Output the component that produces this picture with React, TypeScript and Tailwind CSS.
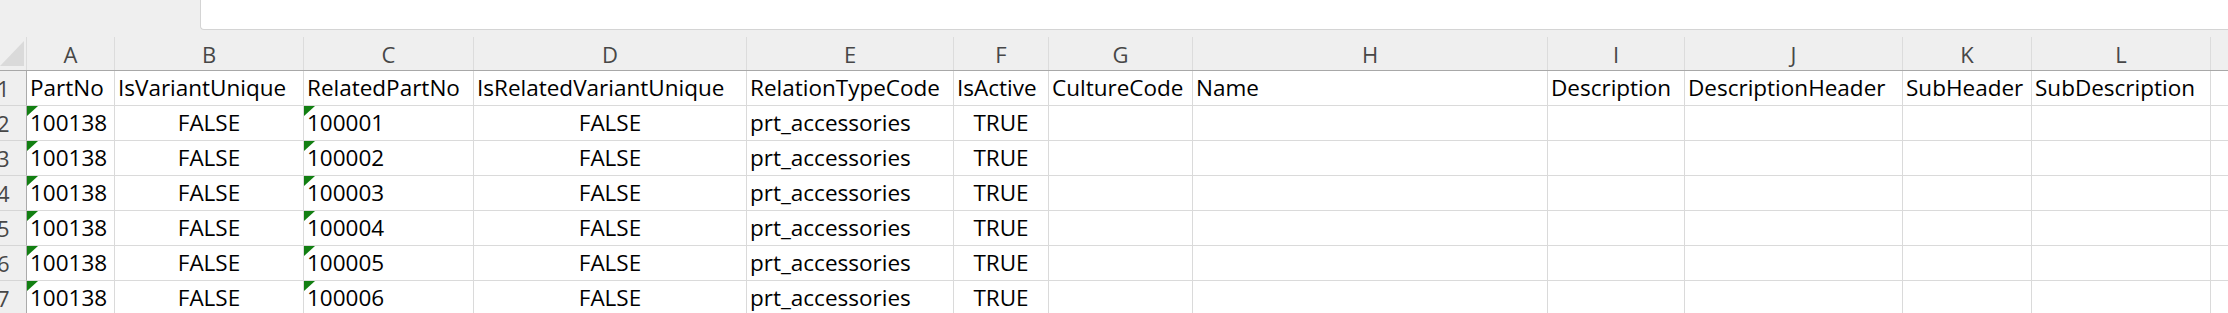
import React from 'react';

type Col = { l: string; w: string };

const cols: Col[] = [
  { l: 'A', w: 'w-[88px]' },
  { l: 'B', w: 'w-[189px]' },
  { l: 'C', w: 'w-[170px]' },
  { l: 'D', w: 'w-[273px]' },
  { l: 'E', w: 'w-[207px]' },
  { l: 'F', w: 'w-[95px]' },
  { l: 'G', w: 'w-[144px]' },
  { l: 'H', w: 'w-[355px]' },
  { l: 'I', w: 'w-[137px]' },
  { l: 'J', w: 'w-[218px]' },
  { l: 'K', w: 'w-[129px]' },
  { l: 'L', w: 'w-[179px]' },
  { l: '', w: 'w-[120px]' },
];

type Cell = { v?: string; c?: boolean; t?: boolean };

const headerRow: Cell[] = [
  { v: 'PartNo' },
  { v: 'IsVariantUnique' },
  { v: 'RelatedPartNo' },
  { v: 'IsRelatedVariantUnique' },
  { v: 'RelationTypeCode' },
  { v: 'IsActive' },
  { v: 'CultureCode' },
  { v: 'Name' },
  { v: 'Description' },
  { v: 'DescriptionHeader' },
  { v: 'SubHeader' },
  { v: 'SubDescription' },
  {},
];

const dataRow = (n: number): Cell[] => [
  { v: '100138', t: true },
  { v: 'FALSE', c: true },
  { v: `10000${n}`, t: true },
  { v: 'FALSE', c: true },
  { v: 'prt_accessories' },
  { v: 'TRUE', c: true },
  {},
  {},
  {},
  {},
  {},
  {},
  {},
];

const rows: Cell[][] = [headerRow, ...[1, 2, 3, 4, 5, 6].map((n) => dataRow(n))];

function Tri() {
  return (
    <svg className="absolute left-0 top-0" width="11" height="10" viewBox="0 0 11 10">
      <polygon points="0,0 11,0 0,10" fill="#127f12" />
    </svg>
  );
}

export default function App() {
  return (
    <div className="w-[2228px] h-[313px] overflow-hidden bg-white font-['Open_Sans'] text-[22.5px] text-black">
      {/* formula bar strip */}
      <div className="flex h-[30px] bg-[#efefef]">
        <div className="w-[200px] shrink-0" />
        <div className="flex-1 bg-white border-l border-b border-[#d4d4d4] rounded-bl-[4px]" />
      </div>

      {/* column headers */}
      <div className="flex h-[41px] bg-[#efefef] border-b border-[#a8a8a8]">
        <div className="w-[27px] shrink-0 pt-[7px]">
          <div className="h-[33px] border-r border-[#dcdcdc] flex items-end justify-end pr-[2px] pb-[4px]">
            <svg width="24" height="25" viewBox="0 0 24 25">
              <polygon points="24,0 24,25 0,25" fill="#dadada" />
            </svg>
          </div>
        </div>
        {cols.map((c, i) => (
          <div key={i} className={`${c.w} shrink-0 pt-[7px]`}>
            <div className="h-[33px] border-r border-[#dcdcdc] text-center text-[22px] text-[#474747] leading-[35px]">
              {c.l}
            </div>
          </div>
        ))}
      </div>

      {/* rows */}
      {rows.map((r, ri) => (
        <div key={ri} className="flex h-[35px]">
          <div className="w-[27px] shrink-0 h-full bg-[#efefef] border-r border-r-[#ababab] border-b border-b-[#d6d6d6] overflow-hidden text-[22px] text-[#474747] leading-[34px]">
            <div className="ml-[-3px]">{ri + 1}</div>
          </div>
          {cols.map((c, ci) => {
            const cell = r[ci] || {};
            return (
              <div
                key={ci}
                className={`${c.w} shrink-0 h-full relative border-r border-b border-[#dadada] bg-white px-[3px] leading-[34px] whitespace-nowrap overflow-hidden ${
                  cell.c ? 'text-center' : 'text-left'
                }`}
              >
                {cell.t ? <Tri /> : null}
                {cell.v ?? ''}
              </div>
            );
          })}
        </div>
      ))}
    </div>
  );
}
